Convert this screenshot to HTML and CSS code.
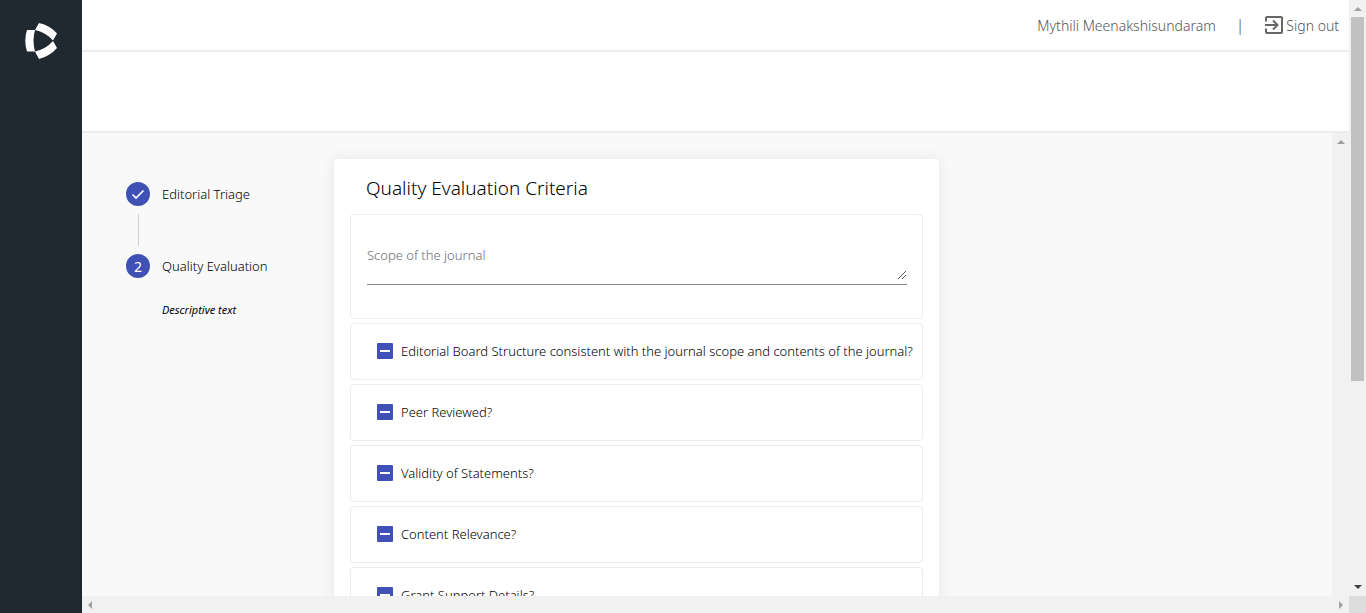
FILE: index.html
```html
<!DOCTYPE html>
<html lang="en">
<head>
<meta charset="utf-8">
<title>Quality Evaluation</title>
<link rel="stylesheet" href="styles.css">
</head>
<body>
<div class="app">
  <nav class="sidebar">
    <a class="brand" href="#" aria-label="Home">
      <svg width="34" height="38" viewBox="0 0 34 38" fill="#fff">
        <path d="M3 8H11Q8 18.500 11 29.500H3Q-0.500 18.500 3 8Z"/>
        <path d="M15 1Q26 3.500 33 11.500L29 18.500Q22 10.500 11 8Z"/>
        <path d="M29 19L33 26Q26 34 15 37L11 29.500Q22 27 29 19Z"/>
      </svg>
    </a>
  </nav>
  <div class="view">
    <div class="page">
      <header class="topbar">
        <span class="user">Mythili Meenakshisundaram</span>
        <span class="divider">|</span>
        <a class="signout" href="#">
          <svg width="20" height="20" viewBox="0 0 20 20" fill="none" stroke="#666" stroke-width="2">
            <path d="M2 6.500V3Q2 2 3 2H17Q18 2 18 3V17Q18 18 17 18H3Q2 18 2 17V13.500"/>
            <path d="M1 10H13M9 5.500L13.500 10L9 14.500"/>
          </svg>
          <span>Sign out</span>
        </a>
      </header>
      <div class="subbar"></div>
      <div class="body">
        <main class="content">
          <ol class="stepper">
            <li class="step">
              <span class="badge">
                <svg width="16" height="16" viewBox="0 0 16 16" fill="none" stroke="#fff" stroke-width="1.700"><path d="M2.500 8.500L6 12L13.500 4.500"/></svg>
              </span>
              <span class="step-label">Editorial Triage</span>
            </li>
            <li class="connector" aria-hidden="true"></li>
            <li class="step">
              <span class="badge">2</span>
              <span class="step-label">Quality Evaluation</span>
            </li>
            <li class="description">Descriptive text</li>
          </ol>
          <form class="card">
            <h1 class="title">Quality Evaluation Criteria</h1>
            <div class="panel scope">
              <textarea class="scope-input" aria-label="Scope of the journal" placeholder="Scope of the journal"></textarea>
              <svg class="grip" width="10" height="10" viewBox="0 0 10 10" stroke="#555" stroke-width="1"><path d="M1 9L9 1M5 9L9 5"/></svg>
            </div>
            <label class="panel check"><input class="box" type="checkbox"><span>Editorial Board Structure consistent with the journal scope and contents of the journal?</span></label>
            <label class="panel check"><input class="box" type="checkbox"><span>Peer Reviewed?</span></label>
            <label class="panel check"><input class="box" type="checkbox"><span>Validity of Statements?</span></label>
            <label class="panel check"><input class="box" type="checkbox"><span>Content Relevance?</span></label>
            <label class="panel check"><input class="box" type="checkbox"><span>Grant Support Details?</span></label>
          </form>
        </main>
        <div class="vbar"><i class="arrow up"></i></div>
      </div>
    </div>
    <div class="vbar"><i class="arrow up"></i><div class="thumb"></div><i class="arrow down"></i></div>
    <div class="hbar"><i class="arrow left"></i><i class="arrow right"></i></div>
    <div class="corner"></div>
  </div>
</div>
</body>
</html>
```
FILE: styles.css
```css
* { box-sizing: border-box; }
body {
  margin: 0;
  font-family: "Noto Sans", "Open Sans", sans-serif;
  font-size: 13px;
  font-weight: 300;
  color: #000;
}
.app { display: flex; height: 100vh; overflow: hidden; }
.sidebar { flex: 0 0 82px; background: #212930; padding: 22px 24px; }
.brand { display: block; height: 38px; }
.view {
  flex: 1;
  min-width: 0;
  display: grid;
  grid-template: minmax(0, 1fr) 17px / minmax(0, 1fr) 17px;
}
.page { display: flex; flex-direction: column; min-height: 0; }
.topbar {
  flex: 0 0 52px;
  display: flex;
  align-items: center;
  justify-content: flex-end;
  padding-right: 10px;
  border-bottom: 2px solid #ececec;
  background: #fff;
  color: #555;
  font-size: 14px;
}
.divider { margin: 0 20px; font-size: 16px; }
.signout { display: flex; align-items: center; gap: 2px; color: inherit; text-decoration: none; }
.subbar { flex: 0 0 81px; background: #fff; border-bottom: 2px solid #ececec; }
.body { flex: 1; min-height: 0; display: flex; }
.content {
  flex: 1;
  min-width: 0;
  display: flex;
  align-items: flex-start;
  overflow: hidden;
  padding-top: 26px;
  background: #f9f9f9;
}
.stepper { flex: 0 0 252px; margin: 0; padding: 23px 0 0 44px; list-style: none; }
.step { display: flex; align-items: center; gap: 12px; height: 24px; }
.badge {
  display: flex;
  align-items: center;
  justify-content: center;
  width: 24px;
  height: 24px;
  border-radius: 50%;
  background: #3f51b5;
  color: #fff;
  font-size: 14px;
  font-weight: 400;
}
.connector { width: 1px; height: 32px; margin: 8px 12px; background: #d0d0d0; }
.description { margin-top: 24px; padding-left: 36px; font-size: 11px; line-height: 16px; font-style: italic; font-weight: 400; }
.card {
  flex: 0 0 auto;
  display: flex;
  flex-direction: column;
  gap: 4px;
  padding: 16px;
  border-radius: 4px;
  background: #fff;
  box-shadow: 0 0 16px rgba(0, 0, 0, 0.08);
}
.title { margin: 0 0 9px; padding: 0 16px; font-size: 19px; line-height: 26px; font-weight: 300; }
.panel { border: 1px solid #ebebeb; border-radius: 4px; }
.scope { position: relative; padding: 28px 15px 33px 16px; }
.scope-input {
  display: block;
  width: 100%;
  height: 42px;
  padding: 2px 0;
  border: 0;
  border-bottom: 1px solid #888;
  resize: none;
  outline: 0;
  background: transparent;
  font: inherit;
  line-height: 20px;
}
.scope-input::placeholder { color: #6e6e6e; opacity: 1; }
.grip { position: absolute; right: 15px; bottom: 38px; }
.check { display: flex; align-items: center; gap: 8px; height: 57px; padding: 0 9px 2px 26px; white-space: nowrap; }
.box {
  appearance: none;
  width: 16px;
  height: 16px;
  margin: 0;
  border-radius: 1px;
  background: linear-gradient(#fff, #fff) center / 10px 2px no-repeat #3f51b5;
}
.vbar { flex: 0 0 17px; display: flex; flex-direction: column; align-items: center; gap: 6px; padding: 7px 0; background: #f1f1f1; }
.thumb { width: 13px; flex: 0 1 364px; background: #c1c1c1; }
.hbar { display: flex; align-items: center; justify-content: space-between; padding: 0 6px; background: #f1f1f1; }
.corner { background: #dcdcdc; }
.arrow { width: 0; height: 0; border: 4px solid transparent; }
.up { border-top: 0; border-bottom-color: #a0a0a0; }
.down { margin-top: auto; border-bottom: 0; border-top-color: #404040; }
.left { border-left: 0; border-right-color: #a0a0a0; }
.right { border-right: 0; border-left-color: #a0a0a0; }
```
